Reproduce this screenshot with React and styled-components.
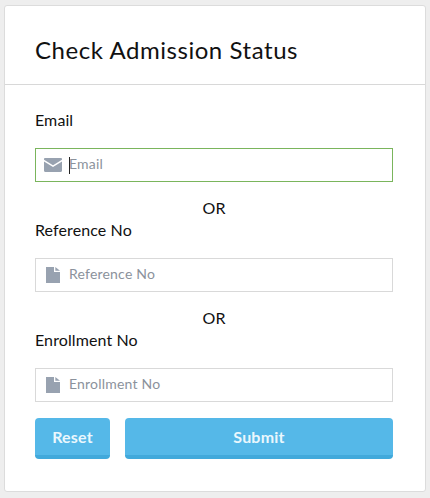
import styled, { createGlobalStyle } from "styled-components"

const GlobalStyle = createGlobalStyle`
  html, body {
    margin: 0;
    padding: 0;
    background-color: #eeeeee;
  }
  * {
    box-sizing: border-box;
  }
`

const Page = styled.div`
  width: 430px;
  height: 498px;
  padding: 5px 4px 6px 4px;
  font-family: "Lato", "Open Sans", sans-serif;
`

const Card = styled.div`
  height: 487px;
  background-color: #fff;
  border: solid 1px #dcdcdc;
  border-radius: 3px;
`

const Header = styled.div`
  height: 79px;
  padding: 9px 30px 0 30px;
  display: flex;
  align-items: center;
  border-bottom: solid 1px #d8d8d8;

  h1 {
    margin: 0;
    font-size: 24px;
    font-weight: 400;
    color: #111;
    letter-spacing: 0.55px;
  }
`

const Form = styled.form`
  padding: 25px 32px 0 30px;
  display: flex;
  flex-direction: column;
`

const Label = styled.label`
  font-size: 16px;
  line-height: 20px;
  color: #111;
  letter-spacing: 0.1px;
`

const InputBox = styled.div`
  position: relative;
  margin-top: 18px;
  height: 34px;
  display: flex;
  align-items: center;
  border: solid 1px ${(props) => (props.$active ? "#7ab55c" : "#d9d9d9")};
  background-color: #fff;

  svg {
    flex: none;
    fill: #98a2b0;
  }

  input {
    flex: 1;
    min-width: 0;
    margin-left: 7px;
    padding: 0 0 4px 0;
    border: none;
    outline: none;
    font-family: inherit;
    font-size: 14px;
    color: #111;
    background: transparent;
    letter-spacing: 0.2px;
  }

  input::placeholder {
    color: #8b929c;
    opacity: 1;
  }
`

// the reference was taken with the field focused, caret lit
const Caret = styled.span`
  position: absolute;
  left: 33px;
  top: 8px;
  width: 1px;
  height: 17px;
  background-color: #222;
`

const MailSvg = styled.svg`
  margin-left: 8px;
`

const FileSvg = styled.svg`
  margin-left: 10px;
  margin-right: 2px;
`

const Or = styled.div`
  margin: 16px 0 2px 0;
  text-align: center;
  font-size: 16px;
  line-height: 20px;
  color: #111;
`

const Actions = styled.div`
  margin-top: 16px;
  display: flex;
  gap: 15px;
`

const Button = styled.button`
  flex: ${(props) => (props.$wide ? "1" : "none")};
  width: ${(props) => (props.$wide ? "auto" : "75px")};
  height: 41px;
  border: none;
  border-bottom: solid 4px #41a9db;
  border-radius: 4px;
  background-color: #55b8e8;
  color: #eaf7fd;
  font-family: inherit;
  font-size: 16px;
  font-weight: 700;
  letter-spacing: 0.2px;
  padding: 0;
`

const MailIcon = () => (
  <MailSvg width="18" height="14" viewBox="0 0 18 14">
    <path d="M1.2 0h15.6c.7 0 1.2.5 1.2 1.2v.5L9 7.2 0 1.7v-.5C0 .5.5 0 1.2 0z" />
    <path d="M0 3.6l9 5.500 9-5.500v9.200c0 .7-.5 1.200-1.200 1.200H1.200C.5 14 0 13.500 0 12.800z" />
  </MailSvg>
)

const FileIcon = () => (
  <FileSvg width="14" height="16" viewBox="0 0 14 16">
    <path d="M0 0h8v5h6v11H0z" />
    <path d="M9.300 0L14 3.800H9.300z" />
  </FileSvg>
)

export default function App() {
  return (
    <Page>
      <GlobalStyle />
      <Card>
        <Header>
          <h1>Check Admission Status</h1>
        </Header>
        <Form onSubmit={(e) => e.preventDefault()}>
          <Label>Email</Label>
          <InputBox $active>
            <MailIcon />
            <input type="text" placeholder="Email" />
            <Caret />
          </InputBox>
          <Or>OR</Or>
          <Label>Reference No</Label>
          <InputBox>
            <FileIcon />
            <input type="text" placeholder="Reference No" />
          </InputBox>
          <Or>OR</Or>
          <Label>Enrollment No</Label>
          <InputBox>
            <FileIcon />
            <input type="text" placeholder="Enrollment No" />
          </InputBox>
          <Actions>
            <Button type="reset">Reset</Button>
            <Button type="submit" $wide>
              Submit
            </Button>
          </Actions>
        </Form>
      </Card>
    </Page>
  )
}
